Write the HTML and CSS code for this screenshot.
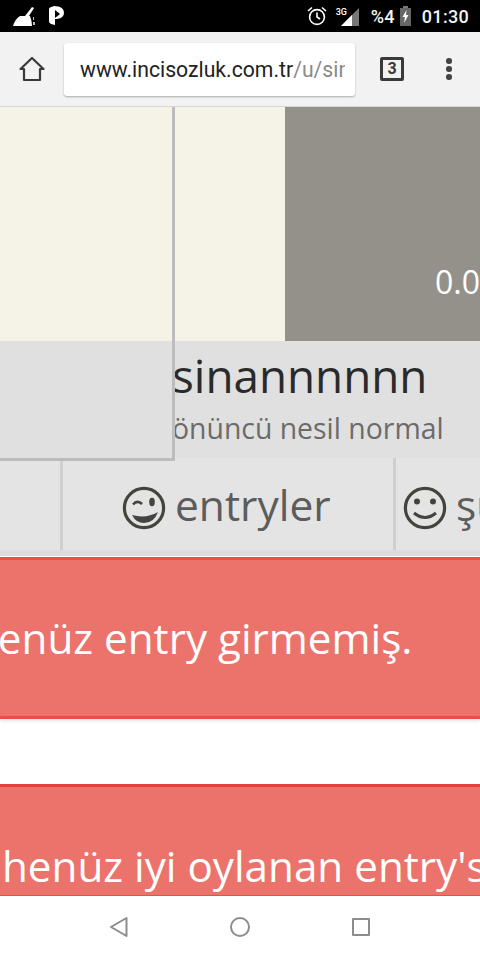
FILE: index.html
```html
<!DOCTYPE html>
<html lang="tr">
  <head>
    <meta charset="utf-8">
    <title>sinannnnnn - incisozluk</title>
    <link rel="stylesheet" href="styles.css">
  </head>
  <body>
    <div class="phone">
      <header class="statusbar">
        <div class="status-left">
          <svg width="23" height="21" viewBox="0 0 23 21"><path d="M0 20 Q2 13 7 10 H17 Q19 15 19 20 Z" fill="#fff"/><path d="M12 10 L19 1 L21 2 L16 10 Z" fill="#fff"/><path d="M20 11 H21 V14 H20 Z M20 16 H22 V19 H20 Z" fill="#bbb"/></svg>
          <svg width="16" height="20" viewBox="0 0 16 20"><path d="M0 3 Q0 2 1 1.5 L5 0 Q15 0 15 7 Q15 12 8 13 L6 13 L6 19 L2 18 Q0 17 0 15 Z" fill="#fff"/><path d="M6 4 L11 8 L6 12 Z" fill="#000"/></svg>
        </div>
        <div class="status-right">
          <svg width="20" height="20" viewBox="0 0 20 20" fill="none" stroke="#fff" stroke-width="1.6"><circle cx="10" cy="11" r="7.4"/><path d="M10 6.5 V11 L13 13"/><path d="M1 5 L5 1.5 M19 5 L15 1.5"/></svg>
          <div class="signal">
            <span class="signal-type">3G</span>
            <svg width="18" height="18" viewBox="0 0 18 18"><path d="M0 18 L18 0 V18 Z" fill="#777"/><path d="M0 18 L11 7 V18 Z" fill="#fff"/></svg>
          </div>
          <span class="status-text battery-pct">%4</span>
          <svg width="11" height="20" viewBox="0 0 11 20"><rect x="3" y="0" width="5" height="2" fill="#777"/><rect x="0" y="2" width="11" height="18" fill="#666"/><path d="M6.5 4 L2.5 11 H5 L4 17 L8.5 9 H6 Z" fill="#fff"/></svg>
          <span class="status-text">01:30</span>
        </div>
      </header>

      <nav class="toolbar">
        <svg class="home" width="26" height="26" viewBox="0 0 26 26" fill="none" stroke="#3a3a3a" stroke-width="2.2" stroke-linejoin="round"><path d="M1.5 13 L13 2 L24.5 13 H21 V24 H5 V13 Z"/></svg>
        <div class="urlbar"><div class="url-text"><span class="host">www.incisozluk.com.tr</span><span class="path">/u/sinannnnnn</span></div></div>
        <div class="tabcount">3</div>
        <div class="dots"><i></i><i></i><i></i></div>
      </nav>

      <main class="page">
        <aside class="avatar">
          <div class="avatar-cover"></div>
        </aside>

        <section class="cover">
          <div class="cover-light"></div>
          <div class="cover-dark"><span class="score">0.00</span></div>
        </section>

        <section class="profile">
          <h1 class="name">sinannnnnn</h1>
          <p class="rank">önüncü nesil normal</p>
        </section>

        <div class="tabs">
          <div class="tab tab-stub"></div>
          <div class="tab tab-entries">
            <svg class="smile" width="44" height="44" viewBox="0 0 44 44" fill="none" stroke="#44443f" stroke-width="3.2"><circle cx="22" cy="22" r="19.6"/><path d="M11 18.5 Q15.5 13.5 20 18" stroke-width="2.6"/><ellipse cx="30" cy="16" rx="2.8" ry="4.2" fill="#44443f" stroke="none"/><path d="M10 29 Q24 33 36 26 Q32 37 22 37 Q14 37 10 29 Z" fill="#44443f" stroke="none"/></svg>
            <span>entryler</span>
          </div>
          <div class="tab tab-next">
            <svg class="smile" width="44" height="44" viewBox="0 0 44 44" fill="none" stroke="#44443f" stroke-width="3.2"><circle cx="22" cy="22" r="19.6"/><circle cx="14" cy="15.5" r="3" fill="#44443f" stroke="none"/><circle cx="30" cy="15.5" r="3" fill="#44443f" stroke="none"/><path d="M11 27 Q22 36 33 27" stroke-width="3"/></svg>
            <span>şu</span>
          </div>
        </div>

        <div class="notice notice-first">
          <p>henüz entry girmemiş.</p>
        </div>
        <div class="notice notice-second">
          <p>henüz iyi oylanan entry'si yok.</p>
        </div>
      </main>

      <footer class="navbar">
        <svg width="20" height="22" viewBox="0 0 20 22" fill="none" stroke="#8c8c8c" stroke-width="2" stroke-linejoin="round"><path d="M17.5 2 V20 L2 11 Z"/></svg>
        <svg width="22" height="22" viewBox="0 0 22 22" fill="none" stroke="#8c8c8c" stroke-width="2"><circle cx="11" cy="11" r="9"/></svg>
        <svg width="20" height="20" viewBox="0 0 20 20" fill="none" stroke="#8c8c8c" stroke-width="2" stroke-linejoin="round"><rect x="2" y="2" width="16" height="16"/></svg>
      </footer>
    </div>
  </body>
</html>
```

FILE: styles.css
```css
:root {
  --cream: #f5f2e7;
  --band: #e0e0e0;
  --tab: #e4e4e4;
  --rule: #cfcfcf;
  --red: #eb736b;
  --red-edge: #e5504a;
}

html, body {
  margin: 0;
  padding: 0;
}

body {
  font-family: "Open Sans", sans-serif;
  background: #fff;
}

.phone {
  width: 480px;
  height: 960px;
  display: flex;
  flex-direction: column;
  overflow: hidden;
}

/* status bar */
.statusbar {
  height: 32px;
  background: #000;
  display: flex;
  justify-content: space-between;
  align-items: center;
  padding: 0 11px 0 13px;
  flex: none;
}
.status-left {
  display: flex;
  align-items: center;
  gap: 13px;
}
.status-right {
  display: flex;
  align-items: center;
}
.signal {
  display: flex;
  align-items: flex-end;
  margin-left: 9px;
  position: relative;
  width: 23px;
  height: 20px;
  justify-content: flex-end;
}
.signal-type {
  position: absolute;
  left: 0;
  top: 1px;
  font: 500 9px Roboto, sans-serif;
  color: #fff;
}
.status-text {
  font: 500 18px Roboto, sans-serif;
  color: #f4f4f4;
  letter-spacing: 0.3px;
}
.battery-pct {
  margin: 0 5px 0 12px;
}
.status-text:last-child {
  margin-left: 11px;
}

/* browser toolbar */
.toolbar {
  height: 74px;
  background: #f2f2f2;
  display: flex;
  align-items: center;
  flex: none;
}
.home {
  margin-left: 19px;
  flex: none;
}
.urlbar {
  margin-left: 19px;
  width: 291px;
  height: 53px;
  background: #fff;
  border-radius: 3px;
  box-shadow: 0 1px 2px rgba(0, 0, 0, 0.3);
  box-sizing: border-box;
  padding: 0 10px 0 16px;
  flex: none;
}
.url-text {
  font: 400 21.2px/53px Roboto, sans-serif;
  white-space: nowrap;
  overflow: hidden;
}
.host {
  color: #222;
}
.path {
  color: #8a8a8a;
}
.tabcount {
  margin-left: 25px;
  width: 18px;
  height: 18px;
  border: 3px solid #3a3a3a;
  border-radius: 2px;
  font: 700 16px/18px Roboto, sans-serif;
  text-align: center;
  color: #3a3a3a;
  flex: none;
}
.dots {
  margin-left: 42px;
  display: flex;
  flex-direction: column;
  gap: 2.5px;
}
.dots i {
  width: 5.5px;
  height: 5.5px;
  border-radius: 50%;
  background: #444;
}

/* page */
.page {
  flex: 1;
  position: relative;
  overflow: hidden;
  display: flex;
  flex-direction: column;
  border-top: 1px solid #d8d8d0;
}
.avatar {
  position: absolute;
  left: 0;
  top: 0;
  width: 172px;
  height: 351px;
  border-right: 3px solid #bcbcbc;
  border-bottom: 3px solid #bcbcbc;
  background: var(--band);
  z-index: 2;
}
.avatar-cover {
  height: 234px;
  background: var(--cream);
}
.cover {
  height: 234px;
  display: flex;
  flex: none;
}
.cover-light {
  width: 285px;
  background: var(--cream);
}
.cover-dark {
  flex: 1;
  background: #93918a;
  display: flex;
  align-items: flex-end;
  padding: 0 0 39px 150px;
  white-space: nowrap;
  overflow: hidden;
}
.score {
  font-size: 32px;
  line-height: 40px;
  color: #fff;
}
.profile {
  height: 117px;
  background: var(--band);
  box-sizing: border-box;
  padding: 4px 0 0 172px;
  flex: none;
}
.name {
  margin: 0;
  font-size: 45.8px;
  line-height: 60px;
  font-weight: 400;
  color: #2a2a2a;
}
.rank {
  margin: 0;
  font-size: 28.4px;
  line-height: 36px;
  color: #6b6b6b;
  margin-top: 5px;
  white-space: nowrap;
}

.tabs {
  height: 98px;
  background: var(--tab);
  border-bottom: 6px solid #dcdcdc;
  box-sizing: border-box;
  display: flex;
  flex: none;
}
.tab {
  display: flex;
  align-items: center;
  gap: 9px;
  font-size: 42.5px;
  color: #5c5c5c;
  box-sizing: border-box;
  white-space: nowrap;
  overflow: hidden;
}
.smile {
  flex: none;
  margin-top: 8px;
}
.tab-stub {
  width: 63px;
  border-right: 3px solid var(--rule);
}
.tab-entries {
  width: 333px;
  border-right: 3px solid var(--rule);
  padding-left: 59px;
}
.tab-next {
  flex: 1;
  padding-left: 7px;
}

.notice {
  background: var(--red);
  color: #fff;
  white-space: nowrap;
  overflow: hidden;
  box-sizing: border-box;
}
.notice p {
  margin: 0;
  font-size: 42.2px;
  line-height: 60px;
}
.notice-first {
  margin-top: 1px;
  height: 162px;
  border-top: 3px solid var(--red-edge);
  border-bottom: 3px solid var(--red-edge);
  padding-top: 48px;
  box-shadow: 0 2px 4px rgba(0, 0, 0, 0.1);
}
.notice-first p {
  margin-left: -28px;
}
.notice-second {
  margin-top: 65px;
  flex: 1;
  border-top: 3px solid #e4413c;
  border-bottom: 1px solid var(--red-edge);
  padding-top: 49px;
}
.notice-second p {
  margin-left: 2px;
}

.navbar {
  height: 64px;
  flex: none;
  background: #fff;
  display: flex;
  align-items: center;
  justify-content: center;
  gap: 100px;
  box-sizing: border-box;
  padding-bottom: 2px;
}
```
